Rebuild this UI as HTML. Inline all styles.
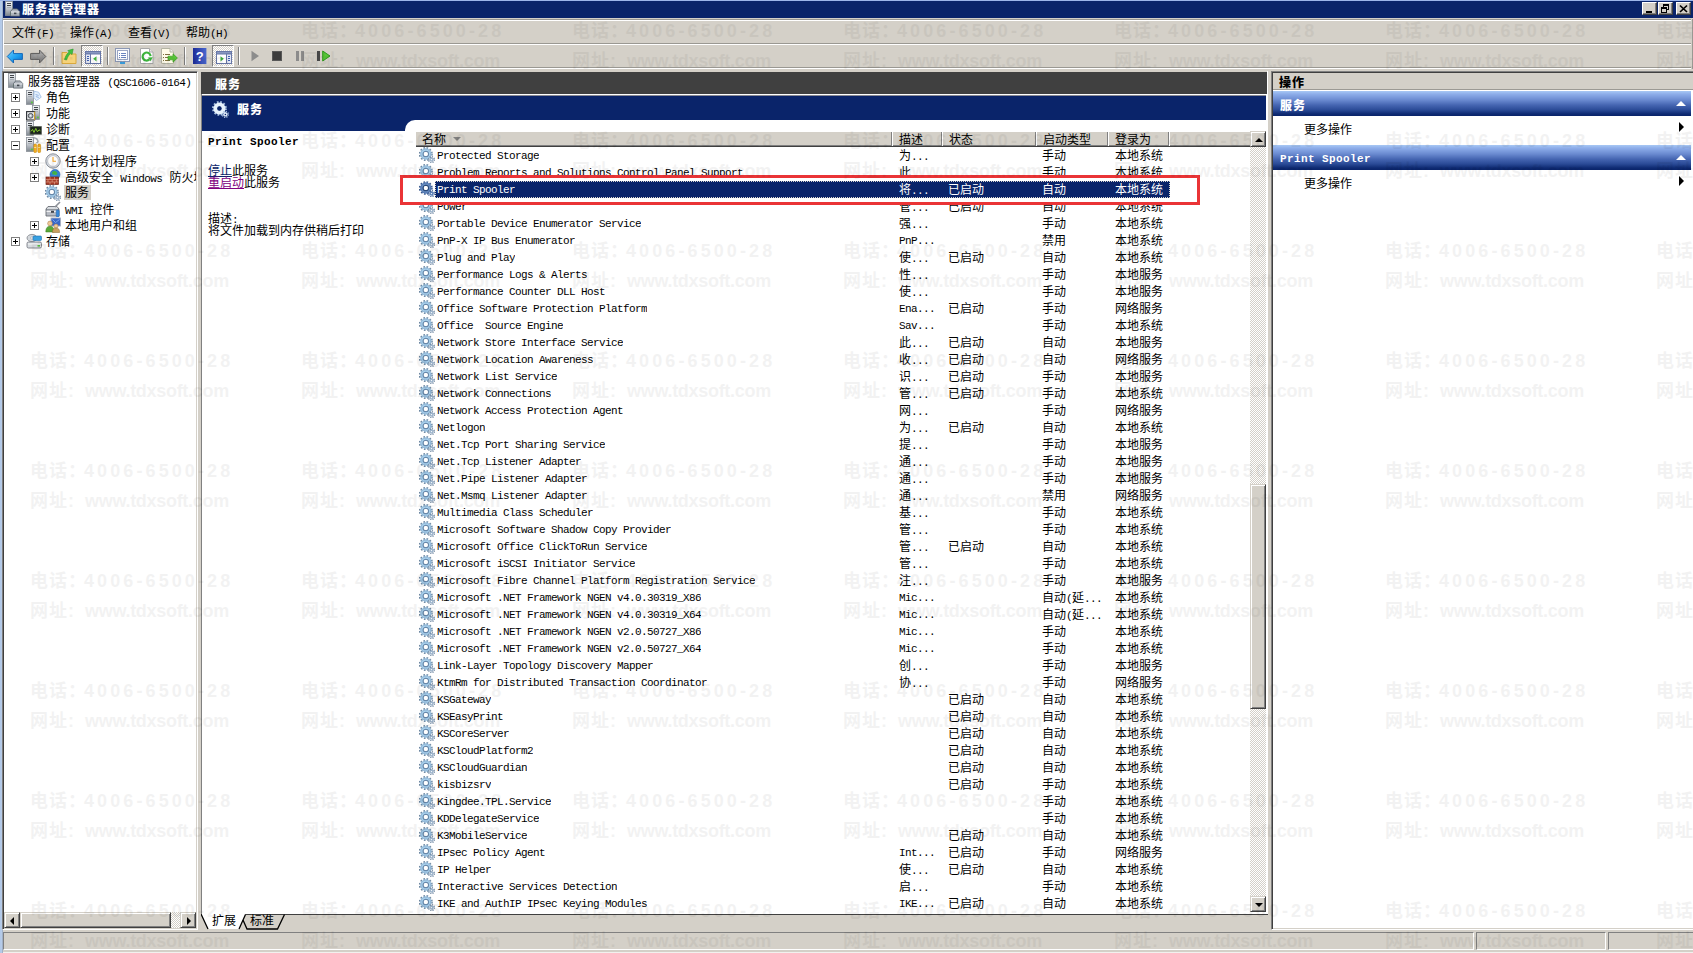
<!DOCTYPE html>
<html lang="zh-CN"><head><meta charset="utf-8"><title>服务器管理器</title>
<style>
*{box-sizing:border-box;margin:0;padding:0}
html,body{width:1693px;height:953px;overflow:hidden;background:#d4d0c8}
body{position:relative;font:12px/14px "Liberation Mono","Noto Sans CJK SC",monospace;color:#000}
.e{font-family:"Liberation Mono",monospace;font-size:11px;letter-spacing:-0.6px}
.abs{position:absolute}
.b{font-weight:bold}
#frameL{left:0;top:0;width:3px;height:953px;background:linear-gradient(90deg,#b0c8ea 0,#b8cce6 2px,#a0b0c8 2px,#a0b0c8 3px)}
#topline{left:0;top:0;width:1693px;height:1px;background:#9db6ea}
#title{left:3px;top:1px;width:1690px;height:17px;background:#0a246a;color:#fff;font-weight:bold}
#title .tx{position:absolute;left:19px;top:3px;font-size:12px;letter-spacing:1px;line-height:14px;font-weight:900}
.wb{position:absolute;top:1px;width:15px;height:13px;background:#d4d0c8;border:1px solid;border-color:#fff #404040 #404040 #fff;box-shadow:inset -1px -1px 0 #808080}
#menusep1{left:3px;top:19px;width:1688px;height:1px;background:#9a9892}
#menusep2{left:3px;top:20px;width:1688px;height:1px;background:#fff}
.mi{position:absolute;top:27px;height:14px;white-space:nowrap}
#tbsep1{left:3px;top:43px;width:1688px;height:1px;background:#9a9892}
#tbsep2{left:3px;top:44px;width:1688px;height:1px;background:#fff}
#tbsep3{left:3px;top:67px;width:1688px;height:1px;background:#9a9892}
#tbsep4{left:3px;top:68px;width:1688px;height:1px;background:#fff}
.ti{position:absolute;top:48px;width:16px;height:16px}
.tsep{position:absolute;top:47px;width:2px;height:18px;border-left:1px solid #808080;border-right:1px solid #fff}
.tpress{position:absolute;top:45px;width:22px;height:22px;border:1px solid;border-color:#808080 #fff #fff #808080;background:repeating-conic-gradient(#fff 0 25%,#d4d0c8 0 50%) 0 0/2px 2px}
/* tree */
#tree{left:2px;top:71px;width:196px;height:859px;background:#fff;border:1px solid;border-color:#808080 #fff #fff #808080;box-shadow:inset 1px 1px 0 #404040,inset -1px -1px 0 #d4d0c8}
.tr{position:absolute;height:16px;line-height:16px;white-space:nowrap;padding-top:2px}
.pm{position:absolute;width:9px;height:9px;border:1px solid #808080;background:#fff}
.pm:before{content:"";position:absolute;left:1px;top:3px;width:5px;height:1px;background:#000}
.pm.p:after{content:"";position:absolute;left:3px;top:1px;width:1px;height:5px;background:#000}
.ic{position:absolute;width:16px;height:16px}
/* hscroll */
#hs{left:4px;top:912px;width:192px;height:16px}
.sb{position:absolute;background:#d4d0c8;border:1px solid;border-color:#d4d0c8 #404040 #404040 #d4d0c8;box-shadow:inset 1px 1px 0 #fff,inset -1px -1px 0 #808080}
/* middle */
#midhdr{left:201px;top:72px;width:1066px;height:22px;background:#404040;color:#fff;font-weight:bold}
#mid{left:201px;top:94px;width:1067px;height:820px;background:#fff;border-left:1px solid #808080;}
#navy{left:202px;top:96px;width:1064px;height:35px;background:#0a246a}
#corner{left:405px;top:120px;width:861px;height:13px;background:#fff;border-top-left-radius:10px 10px}
#lh{left:416px;top:132px;width:834px;height:15px;background:#d4d0c8;border-bottom:1px solid #404040;box-shadow:inset 0 -1px 0 #808080}
.hc{position:absolute;top:0;height:14px;border-right:1px solid #808080;box-shadow:1px 0 0 #fff;padding-left:6px;padding-top:2px;line-height:14px;white-space:nowrap}
.r{position:absolute;left:416px;width:834px;height:17px;line-height:17px;white-space:pre}
.r .g{position:absolute;left:3px;top:0;width:16px;height:16px}
.c{position:absolute;top:0;height:17px;overflow:hidden;padding-top:2px}
.c.n,.c.la{padding-top:1px}
.n{left:21px}.d{left:483px}.s{left:532px}.t{left:626px}.l{left:699px}
.sel{z-index:6}
.sel .c{color:#fff}
.selbg{position:absolute;left:19px;top:0;width:735px;height:17px;background:#0a246a;outline:1px dotted #d9d5cd;outline-offset:-1px}
.wm{position:absolute;font:18px/20px "Liberation Sans","Noto Sans CJK SC",sans-serif;color:#000;opacity:.046;font-weight:bold;white-space:nowrap;letter-spacing:1px;pointer-events:none;z-index:50}
/* right */
#right{left:1271px;top:71px;width:422px;height:859px;background:#fff;border:1px solid;border-color:#808080 #fff #fff #808080;border-right:0;box-shadow:inset 1px 1px 0 #404040,inset 0 -1px 0 #d4d0c8}
.ah{position:absolute;left:1273px;width:418px;height:25px;background:linear-gradient(#a8c8f4 0,#8eaeea 3px,#6a8ad0 9px,#4666b2 14px,#2a4a96 19px,#0e2a72 23px,#0a246a 25px);color:#fff;font-weight:bold;line-height:14px;padding:9px 0 0 7px}
.tri-up{position:absolute;right:5px;top:10px;width:0;height:0;border:5px solid transparent;border-top:0;border-bottom:5px solid #fff}
.tri-r{position:absolute;width:0;height:0;border:5px solid transparent;border-right:0;border-left:5px solid #000}

.eb{font-weight:bold;letter-spacing:.4px}
.bc{letter-spacing:1px;font-weight:900}
.dither{background:repeating-conic-gradient(#fff 0 25%,#d4d0c8 0 50%) 0 0/2px 2px}
.tri-l{position:absolute;width:0;height:0;border:4px solid transparent;border-left:0;border-right:4px solid #000}
.tri-u{position:absolute;width:0;height:0;border:4px solid transparent;border-top:0;border-bottom:4px solid #000}
.tri-d{position:absolute;width:0;height:0;border:4px solid transparent;border-bottom:0;border-top:4px solid #000}
.hc{top:132px}
.wd{letter-spacing:3.1px;margin-left:-3px}
.ww{margin-left:10px;letter-spacing:-.3px}
#navy:before{content:"";position:absolute;left:0;top:-1px;width:100%;height:1px;background:#8a8a92}
.tri-r4{position:absolute;width:0;height:0;border:4px solid transparent;border-right:0;border-left:4px solid #000}
</style></head><body>
<svg width="0" height="0" style="position:absolute">
<defs>
<g id="gear">
<circle cx="6.8" cy="7" r="5.9" fill="none" stroke="#6e88a2" stroke-width="2.2" stroke-dasharray="1.6 1.49"/>
<circle cx="6.8" cy="7" r="4.2" fill="none" stroke="#aad4f0" stroke-width="3"/>
<circle cx="6.8" cy="7" r="4.9" fill="none" stroke="#8eb0d0" stroke-width=".9"/>
<circle cx="6.8" cy="7" r="2.7" fill="none" stroke="#6888aa" stroke-width="1.3"/>
<circle cx="6.8" cy="7" r="2" fill="#fff"/>
<circle cx="12.5" cy="12.6" r="2.8" fill="none" stroke="#6c849e" stroke-width="1.4" stroke-dasharray="1.1 1.1"/>
<circle cx="12.5" cy="12.6" r="2.1" fill="#9cb4cc"/>
<circle cx="12.5" cy="12.6" r=".7" fill="#fff"/>
</g>
<g id="gearsel">
<circle cx="6.8" cy="7" r="5.9" fill="none" stroke="#34548a" stroke-width="2" stroke-dasharray="1.6 1.49"/>
<circle cx="6.8" cy="7" r="4.2" fill="none" stroke="#6a90c4" stroke-width="3"/>
<circle cx="6.8" cy="7" r="4.9" fill="none" stroke="#4c70aa" stroke-width=".8"/>
<circle cx="6.8" cy="7" r="2.7" fill="none" stroke="#284878" stroke-width="1.3"/>
<circle cx="6.8" cy="7" r="2" fill="#fff"/>
<circle cx="12.5" cy="12.6" r="2.8" fill="none" stroke="#3a5a90" stroke-width="1.4" stroke-dasharray="1.1 1.1"/>
<circle cx="12.5" cy="12.6" r="2.1" fill="#5c80b8"/>
<circle cx="12.5" cy="12.6" r=".7" fill="#fff"/>
</g>
<linearGradient id="tg" x1="0" y1="0" x2="0" y2="1"><stop offset="0" stop-color="#f6f8fa"/><stop offset=".4" stop-color="#d0d4da"/><stop offset="1" stop-color="#7e868e"/></linearGradient>
<g id="tower"><rect x=".4" y=".4" width="7" height="14" fill="url(#tg)" stroke="#8a9098" stroke-width=".8"/><path d="M2 2.5h4M2 4.5h4" stroke="#30343a" stroke-width=".9"/><path d="M2 6.6h4" stroke="#9aa0a8" stroke-width=".8"/><rect x="5" y="11.6" width="1.8" height="1.6" fill="#58c83c"/></g>
<g id="srvico">
<use href="#tower" x="0" y="0"/>
<path d="M5.5 10.5 l2.2 -2.6 h4.6 l2.4 2.6 v4.6 h-9.2z" fill="#aeb4bc" stroke="#5c646c" stroke-width=".8"/>
<path d="M6 11h8.4" stroke="#f0f2f4" stroke-width=".9"/>
<rect x="9" y="11.6" width="2.4" height="1.6" fill="#40464e"/>
</g>
<g id="rolesico">
<use href="#tower" x="0" y="1"/>
<path d="M8 2.2 l4.6 1 l2.6 5 l-4.8 3.4 l-2.6 -3.2z" fill="#e4f0fc" stroke="#9cbce4" stroke-width=".8"/>
<path d="M9.6 5.6 l3 .8M9.8 7.6 l3 .8" stroke="#78a0d8" stroke-width=".8"/>
</g>
<g id="featico">
<use href="#tower" x="6" y="0"/>
<rect x=".6" y="6.6" width="8" height="8.4" fill="#e8eaec" stroke="#2c3036" stroke-width="1.1"/>
<circle cx="4.6" cy="10.8" r="2.4" fill="#b8bec6" stroke="#30343a" stroke-width=".8"/>
<circle cx="4.6" cy="10.8" r=".8" fill="#fff"/>
<path d="M8.6 6.6v8.4" stroke="#f0b828" stroke-width=".9"/>
</g>
<g id="diagico">
<use href="#tower" x="0" y="0"/>
<rect x="4" y="5.6" width="11.4" height="7.6" fill="#1c241c" stroke="#586058" stroke-width=".8"/>
<path d="M5 10.4 l1.6 -2 l1.4 3 l1.8 -4 l1.6 3.4 l1.6 -2 l1.4 1" fill="none" stroke="#8cd830" stroke-width=".9"/>
</g>
<g id="confico">
<use href="#tower" x="0" y="0"/>
<path d="M8 .8 c2 .2 3.6 1.6 4 4 l-1.6 1.4" fill="none" stroke="#a8aeb6" stroke-width="1.6"/>
<rect x="7.8" y="7" width="2.8" height="8.6" rx="1.2" fill="#f4b020" stroke="#b87808" stroke-width=".5"/>
<rect x="11.8" y="7" width="2.8" height="8.6" rx="1.2" fill="#f4b020" stroke="#b87808" stroke-width=".5"/>
<path d="M8.2 10.5h2M12.2 10.5h2" stroke="#fff0a0" stroke-width=".8"/>
</g>
<g id="clockico">
<circle cx="8" cy="8" r="7.2" fill="#d8dce4" stroke="#8c9098" stroke-width="1"/>
<circle cx="8" cy="8" r="5.4" fill="#fcfcfc" stroke="#b0b4bc" stroke-width=".7"/>
<path d="M8 4 v4.2 h3" fill="none" stroke="#f0a020" stroke-width="1.1"/>
</g>
<g id="fwico">
<circle cx="10" cy="5.5" r="5" fill="#3888d8" stroke="#2060b0" stroke-width=".6"/>
<path d="M7 3.5 c2 -2.5 4 -1.5 5 0 c1 1.5 -.5 3 -2 2.5 c-1.5 -.5 -2.5 .5 -3 -2.5z" fill="#48b848"/>
<rect x="1" y="8" width="12.5" height="7.5" fill="#a83c28" stroke="#6c2014" stroke-width=".7"/>
<path d="M1 10.5h12.5M1 13h12.5M5 8v2.5M9.5 8v2.5M3 10.5v2.5M7.2 10.5v2.5M11.4 10.5v2.5M5 13v2.5M9.5 13v2.5" stroke="#e0a890" stroke-width=".6"/>
</g>
<g id="wmiico">
<path d="M1 8 h13 v7 h-13z" fill="#b8bcc4" stroke="#5c6068" stroke-width=".8"/>
<path d="M1 8 l2 -2.5 h9 l2 2.5" fill="#d8dce0" stroke="#5c6068" stroke-width=".8"/>
<path d="M1.5 10.5h12" stroke="#fff" stroke-width=".8"/>
<rect x="6" y="9.8" width="3" height="2" fill="#40444c"/>
<path d="M10 6 L15 1" stroke="#8c9098" stroke-width="1.6"/>
<rect x="11.2" y="9" width="3" height="7" rx="1" fill="#3888d8" stroke="#2060a8" stroke-width=".5"/>
</g>
<g id="usersico">
<rect x="6" y="1" width="9.5" height="8" fill="#3868c8" stroke="#a8b0c0" stroke-width=".9"/>
<path d="M7.5 2.5 l3 3 l4 -3" fill="none" stroke="#88b0f0" stroke-width=".8"/>
<circle cx="5" cy="6.5" r="2.4" fill="#f0c898" stroke="#a87848" stroke-width=".5"/>
<path d="M.8 15 c0 -4.5 2 -5.8 4.2 -5.8 s4.2 1.3 4.2 5.8z" fill="#58a838" stroke="#38781c" stroke-width=".5"/>
<circle cx="11" cy="9" r="2.1" fill="#f0c898" stroke="#a87848" stroke-width=".5"/>
<path d="M7.4 15.5 c0 -3.6 1.6 -4.6 3.6 -4.6 s3.6 1 3.6 4.6z" fill="#c8a060" stroke="#886428" stroke-width=".5"/>
</g>
<g id="storico">
<ellipse cx="6" cy="5" rx="5" ry="3.6" fill="#d4d8dc" stroke="#7c8088" stroke-width=".8"/>
<ellipse cx="6" cy="5" rx="1.6" ry="1.1" fill="#fff" stroke="#8c9098" stroke-width=".5"/>
<rect x="7" y="3" width="8.5" height="4.5" rx="1" fill="#38a0e0" stroke="#2070b0" stroke-width=".6"/>
<rect x="1" y="9" width="14.5" height="6" rx="1.5" fill="#d8dce0" stroke="#6c7078" stroke-width=".8"/>
<path d="M2 11 h12.5" stroke="#fff" stroke-width=".8"/>
<rect x="11.5" y="12" width="2.5" height="1.6" fill="#58c040"/>
</g>
<g id="gearnavy">
<circle cx="7" cy="7" r="6" fill="none" stroke="#a8c0e0" stroke-width="2" stroke-dasharray="1.6 1.54"/>
<circle cx="7" cy="7" r="3.9" fill="none" stroke="#e6f2fc" stroke-width="3.6"/>
<circle cx="7" cy="7" r="1.8" fill="#0a246a"/>
<circle cx="12.6" cy="12.6" r="2.8" fill="none" stroke="#a8c0e0" stroke-width="1.4" stroke-dasharray="1.1 1.1"/>
<circle cx="12.6" cy="12.6" r="2.1" fill="#dce8f8"/>
<circle cx="12.6" cy="12.6" r=".7" fill="#0a246a"/>
</g>
</defs></svg>

<div id="frameL" class="abs"></div>
<div class="abs" style="left:3px;top:952px;width:1690px;height:1px;background:#f2f1ee"></div>
<div id="topline" class="abs"></div>
<div id="title" class="abs"><span class="tx">服务器管理器</span>
<svg class="abs" style="left:2px;top:0" width="16" height="16" viewBox="0 0 16 16"><use href="#srvico"/></svg>
<div class="wb" style="left:1639px"><i style="position:absolute;left:3px;top:8px;width:6px;height:2px;background:#000"></i></div>
<div class="wb" style="left:1655px"><i style="position:absolute;left:4px;top:1px;width:6px;height:6px;border:1px solid #000;border-top-width:2px"></i><i style="position:absolute;left:2px;top:4px;width:6px;height:6px;border:1px solid #000;border-top-width:2px;background:#d4d0c8"></i></div>
<div class="wb" style="left:1673px"><svg style="position:absolute;left:2px;top:1px" width="9" height="9" viewBox="0 0 9 9"><path d="M1 1.5 L8 8 M8 1.5 L1 8" stroke="#000" stroke-width="1.7"/></svg></div>
</div>
<div id="menusep1" class="abs"></div><div id="menusep2" class="abs"></div>
<div class="mi" style="left:12px">文件<span class="e">(F)</span></div>
<div class="mi" style="left:70px">操作<span class="e">(A)</span></div>
<div class="mi" style="left:128px">查看<span class="e">(V)</span></div>
<div class="mi" style="left:186px">帮助<span class="e">(H)</span></div>
<div id="tbsep1" class="abs"></div><div id="tbsep2" class="abs"></div>
<div id="tbsep3" class="abs"></div><div id="tbsep4" class="abs"></div>

<!-- toolbar -->
<div class="abs" style="left:3px;top:20px;width:1px;height:48px;background:#fff"></div>
<div class="abs" style="left:1692px;top:19px;width:1px;height:50px;background:#9a9892"></div>
<svg class="abs" style="left:6px;top:48px" width="18" height="16" viewBox="0 0 18 16"><defs><linearGradient id="gb" x1="0" y1="0" x2="1" y2="1"><stop offset="0" stop-color="#6fd0ff"/><stop offset=".55" stop-color="#1ea0f0"/><stop offset="1" stop-color="#0866c8"/></linearGradient></defs><path d="M1.2 8.5 L7.5 2 L7.5 5.6 L16.4 5.6 L16.4 11.4 L7.5 11.4 L7.5 15 Z" fill="url(#gb)" stroke="#1668b8" stroke-width="1"/></svg>
<svg class="abs" style="left:29px;top:48px" width="18" height="16" viewBox="0 0 18 16"><defs><linearGradient id="gg" x1="0" y1="0" x2="0" y2="1"><stop offset="0" stop-color="#b4b4b4"/><stop offset="1" stop-color="#7c7c7c"/></linearGradient></defs><path d="M16.8 8.5 L10.5 2 L10.5 5.6 L1.6 5.6 L1.6 11.4 L10.5 11.4 L10.5 15 Z" fill="url(#gg)" stroke="#606060" stroke-width="1"/></svg>
<div class="tsep" style="left:53px"></div>
<svg class="abs" style="left:61px;top:48px" width="17" height="16" viewBox="0 0 17 16"><path d="M1 4.5 h5 l1.5 1.5 h7.5 v9.5 h-14z" fill="#f6d27a" stroke="#d9a83c"/><path d="M3.5 11.5 C4.5 8 6 5.5 8.2 4 L6.8 2.6 L12.2 1 L11 6.6 L9.6 5.3 C8 6.8 6.6 9 5.6 12Z" fill="#3fc03f" stroke="#2a9a2a" stroke-width=".6"/></svg>
<div class="tpress" style="left:81px"></div>
<svg class="abs" style="left:85px;top:51px" width="16" height="13" viewBox="0 0 16 13"><rect x=".5" y=".5" width="15" height="12" fill="#fff" stroke="#6878a8"/><rect x=".5" y=".5" width="15" height="2.5" fill="#8898c0" stroke="#6878a8"/><rect x=".5" y="3" width="5" height="9.5" fill="#e4e8f4" stroke="#6878a8"/><path d="M2 5.5h2M2 7.5h2M2 9.5h2" stroke="#4060b0"/><path d="M11.5 5.2 v5.2 l-3.4 -2.6z" fill="#40b040"/></svg>
<div class="tsep" style="left:107px"></div>
<svg class="abs" style="left:115px;top:48px" width="15" height="16" viewBox="0 0 15 16"><rect x=".5" y=".5" width="14" height="13" fill="#f4f6fa" stroke="#8c98b4"/><rect x="2.5" y="2.5" width="10" height="9" fill="#fff" stroke="#9aa6c4"/><path d="M4 5.5h1M6 5.5h5M4 7.5h1M6 7.5h5M4 9.5h1M6 9.5h5" stroke="#6a84c0"/><rect x="5" y="14" width="5" height="2" fill="#3aa0e0"/></svg>
<svg class="abs" style="left:140px;top:48px" width="14" height="16" viewBox="0 0 14 16"><path d="M.5 .5 h9 l3.5 3.5 v11.5 h-12.5z" fill="#fff" stroke="#a8a8a8"/><path d="M9.5 .5 v3.5 h3.5" fill="#e8e8e8" stroke="#a8a8a8"/><path d="M10.6 8.2 A4 4 0 1 0 9.4 11.4" fill="none" stroke="#3cb43c" stroke-width="2.2"/><path d="M12.8 9.2 L8 9.6 L10.6 13.2z" fill="#3cb43c"/></svg>
<svg class="abs" style="left:161px;top:48px" width="17" height="16" viewBox="0 0 17 16"><path d="M.5 .5 h8.5 l3.5 3.5 v11.5 h-12z" fill="#fffbe8" stroke="#b4b4a4"/><path d="M9 .5 v3.5 h3.5" fill="#eee" stroke="#b4b4a4"/><path d="M2 6.5h1M4 6.5h5M2 9.5h1M4 9.5h4M2 12.5h1M4 12.5h5" stroke="#807040"/><path d="M7 8.2 h5 v-2.4 l4.4 4.2 l-4.4 4.2 v-2.4 h-5z" fill="#58c838" stroke="#3a9a24" stroke-width=".7"/></svg>
<div class="tsep" style="left:184px"></div>
<svg class="abs" style="left:193px;top:48px" width="14" height="16" viewBox="0 0 14 16"><defs><linearGradient id="gh" x1="0" y1="0" x2="1" y2="0"><stop offset="0" stop-color="#1c2c98"/><stop offset="1" stop-color="#4a68d0"/></linearGradient></defs><rect width="13.4" height="16" fill="url(#gh)"/><text x="6.7" y="13" font-family="Liberation Sans,sans-serif" font-weight="bold" font-size="13" fill="#fff" text-anchor="middle">?</text></svg>
<div class="tpress" style="left:212px"></div>
<svg class="abs" style="left:216px;top:51px" width="16" height="13" viewBox="0 0 16 13"><rect x=".5" y=".5" width="15" height="12" fill="#fff" stroke="#6878a8"/><rect x=".5" y=".5" width="15" height="2.5" fill="#8898c0" stroke="#6878a8"/><rect x="10.5" y="3" width="5" height="9.5" fill="#e4e8f4" stroke="#6878a8"/><path d="M12 5.5h2M12 7.5h2M12 9.5h2" stroke="#4060b0"/><path d="M4.5 5.2 v5.2 l3.4 -2.6z" fill="#40b040"/></svg>
<div class="tsep" style="left:238px"></div>
<svg class="abs" style="left:251px;top:50px" width="9" height="12" viewBox="0 0 9 12"><path d="M.5 .8 L8 6 L.5 11.2z" fill="#8c8c8c"/></svg>
<div class="abs" style="left:272px;top:51px;width:10px;height:10px;background:#3c3c3c;border:1px solid #585858"></div>
<div class="abs" style="left:296px;top:51px;width:3px;height:10px;background:#8c8c8c"></div>
<div class="abs" style="left:301px;top:51px;width:3px;height:10px;background:#8c8c8c"></div>
<div class="abs" style="left:317px;top:51px;width:3px;height:10px;background:#484848"></div>
<svg class="abs" style="left:322px;top:50px" width="9" height="12" viewBox="0 0 9 12"><path d="M.7 1 L8 6 L.7 11z" fill="#58c838" stroke="#2e9a1e" stroke-width="1"/></svg>

<div id="tree" class="abs"></div>
<div id="hs" class="abs dither"></div>
<!-- tree items -->
<svg class="ic" style="left:8px;top:73px" viewBox="0 0 16 16"><use href="#srvico"/></svg>
<div class="tr" style="left:28px;top:73px">服务器管理器 <span class="e">(QSC1606-0164)</span></div>
<div class="pm p" style="left:11px;top:93px"></div>
<svg class="ic" style="left:26px;top:89px" viewBox="0 0 16 16"><use href="#rolesico"/></svg>
<div class="tr" style="left:46px;top:89px">角色</div>
<div class="pm p" style="left:11px;top:109px"></div>
<svg class="ic" style="left:26px;top:105px" viewBox="0 0 16 16"><use href="#featico"/></svg>
<div class="tr" style="left:46px;top:105px">功能</div>
<div class="pm p" style="left:11px;top:125px"></div>
<svg class="ic" style="left:26px;top:121px" viewBox="0 0 16 16"><use href="#diagico"/></svg>
<div class="tr" style="left:46px;top:121px">诊断</div>
<div class="pm" style="left:11px;top:141px"></div>
<svg class="ic" style="left:26px;top:137px" viewBox="0 0 16 16"><use href="#confico"/></svg>
<div class="tr" style="left:46px;top:137px">配置</div>
<div class="pm p" style="left:30px;top:157px"></div>
<svg class="ic" style="left:45px;top:153px" viewBox="0 0 16 16"><use href="#clockico"/></svg>
<div class="tr" style="left:65px;top:153px">任务计划程序</div>
<div class="pm p" style="left:30px;top:173px"></div>
<svg class="ic" style="left:45px;top:169px" viewBox="0 0 16 16"><use href="#fwico"/></svg>
<div class="tr" style="left:65px;top:169px;width:131px;overflow:hidden">高级安全 <span class="e">Windows</span> 防火墙</div>
<svg class="ic" style="left:45px;top:185px" viewBox="0 0 16 16"><use href="#gear"/></svg>
<div class="tr" style="left:64px;top:185px;background:#d4d0c8;padding:2px 2px 0 1px;height:15px;line-height:14px">服务</div>
<svg class="ic" style="left:45px;top:201px" viewBox="0 0 16 16"><use href="#wmiico"/></svg>
<div class="tr" style="left:65px;top:201px"><span class="e">WMI</span> 控件</div>
<div class="pm p" style="left:30px;top:221px"></div>
<svg class="ic" style="left:45px;top:217px" viewBox="0 0 16 16"><use href="#usersico"/></svg>
<div class="tr" style="left:65px;top:217px">本地用户和组</div>
<div class="pm p" style="left:11px;top:237px"></div>
<svg class="ic" style="left:26px;top:233px" viewBox="0 0 16 16"><use href="#storico"/></svg>
<div class="tr" style="left:46px;top:233px">存储</div>
<!-- hscroll -->
<div class="sb" style="left:4px;top:912px;width:16px;height:16px"><i class="tri-l" style="left:5px;top:4px"></i></div>
<div class="sb" style="left:20px;top:912px;width:151px;height:16px"></div>
<div class="sb" style="left:180px;top:912px;width:16px;height:16px"><i class="tri-r4" style="left:6px;top:4px"></i></div>


<div id="midhdr" class="abs"><span class="bc" style="position:absolute;left:14px;top:7px">服务</span></div>
<div id="mid" class="abs"></div>
<div class="abs" style="left:1267px;top:71px;width:1px;height:24px;background:#fff"></div>
<div id="navy" class="abs"><span class="b bc" style="position:absolute;left:35px;top:8px;color:#fff">服务</span></div>
<div id="corner" class="abs"></div>
<div id="lh" class="abs"></div>
<div class="r" style="top:147px"><svg class="g" viewBox="0 0 16 16"><use href="#gear"/></svg><span class="c n"><span class="e">Protected Storage</span></span><span class="c d">为<span class="e">...</span></span><span class="c s"></span><span class="c t">手动</span><span class="c l">本地系统</span></div>
<div class="r cutb" style="top:164px"><svg class="g" viewBox="0 0 16 16"><use href="#gear"/></svg><span class="c n"><span class="e">Problem Reports and Solutions Control Panel Support</span></span><span class="c d">此<span class="e">...</span></span><span class="c s"></span><span class="c t">手动</span><span class="c l">本地系统</span></div>
<div class="r sel" style="top:181px"><i class="selbg"></i><svg class="g" viewBox="0 0 16 16"><use href="#gearsel"/></svg><span class="c n"><span class="e">Print Spooler</span></span><span class="c d">将<span class="e">...</span></span><span class="c s">已启动</span><span class="c t">自动</span><span class="c l">本地系统</span></div>
<div class="r cutt" style="top:198px"><svg class="g" viewBox="0 0 16 16"><use href="#gear"/></svg><span class="c n"><span class="e">Power</span></span><span class="c d">管<span class="e">...</span></span><span class="c s">已启动</span><span class="c t">自动</span><span class="c l">本地系统</span></div>
<div class="r" style="top:215px"><svg class="g" viewBox="0 0 16 16"><use href="#gear"/></svg><span class="c n"><span class="e">Portable Device Enumerator Service</span></span><span class="c d">强<span class="e">...</span></span><span class="c s"></span><span class="c t">手动</span><span class="c l">本地系统</span></div>
<div class="r" style="top:232px"><svg class="g" viewBox="0 0 16 16"><use href="#gear"/></svg><span class="c n"><span class="e">PnP-X IP Bus Enumerator</span></span><span class="c d la"><span class="e">PnP...</span></span><span class="c s"></span><span class="c t">禁用</span><span class="c l">本地系统</span></div>
<div class="r" style="top:249px"><svg class="g" viewBox="0 0 16 16"><use href="#gear"/></svg><span class="c n"><span class="e">Plug and Play</span></span><span class="c d">使<span class="e">...</span></span><span class="c s">已启动</span><span class="c t">自动</span><span class="c l">本地系统</span></div>
<div class="r" style="top:266px"><svg class="g" viewBox="0 0 16 16"><use href="#gear"/></svg><span class="c n"><span class="e">Performance Logs &amp; Alerts</span></span><span class="c d">性<span class="e">...</span></span><span class="c s"></span><span class="c t">手动</span><span class="c l">本地服务</span></div>
<div class="r" style="top:283px"><svg class="g" viewBox="0 0 16 16"><use href="#gear"/></svg><span class="c n"><span class="e">Performance Counter DLL Host</span></span><span class="c d">使<span class="e">...</span></span><span class="c s"></span><span class="c t">手动</span><span class="c l">本地服务</span></div>
<div class="r" style="top:300px"><svg class="g" viewBox="0 0 16 16"><use href="#gear"/></svg><span class="c n"><span class="e">Office Software Protection Platform</span></span><span class="c d la"><span class="e">Ena...</span></span><span class="c s">已启动</span><span class="c t">手动</span><span class="c l">网络服务</span></div>
<div class="r" style="top:317px"><svg class="g" viewBox="0 0 16 16"><use href="#gear"/></svg><span class="c n"><span class="e">Office  Source Engine</span></span><span class="c d la"><span class="e">Sav...</span></span><span class="c s"></span><span class="c t">手动</span><span class="c l">本地系统</span></div>
<div class="r" style="top:334px"><svg class="g" viewBox="0 0 16 16"><use href="#gear"/></svg><span class="c n"><span class="e">Network Store Interface Service</span></span><span class="c d">此<span class="e">...</span></span><span class="c s">已启动</span><span class="c t">自动</span><span class="c l">本地服务</span></div>
<div class="r" style="top:351px"><svg class="g" viewBox="0 0 16 16"><use href="#gear"/></svg><span class="c n"><span class="e">Network Location Awareness</span></span><span class="c d">收<span class="e">...</span></span><span class="c s">已启动</span><span class="c t">自动</span><span class="c l">网络服务</span></div>
<div class="r" style="top:368px"><svg class="g" viewBox="0 0 16 16"><use href="#gear"/></svg><span class="c n"><span class="e">Network List Service</span></span><span class="c d">识<span class="e">...</span></span><span class="c s">已启动</span><span class="c t">手动</span><span class="c l">本地服务</span></div>
<div class="r" style="top:385px"><svg class="g" viewBox="0 0 16 16"><use href="#gear"/></svg><span class="c n"><span class="e">Network Connections</span></span><span class="c d">管<span class="e">...</span></span><span class="c s">已启动</span><span class="c t">手动</span><span class="c l">本地系统</span></div>
<div class="r" style="top:402px"><svg class="g" viewBox="0 0 16 16"><use href="#gear"/></svg><span class="c n"><span class="e">Network Access Protection Agent</span></span><span class="c d">网<span class="e">...</span></span><span class="c s"></span><span class="c t">手动</span><span class="c l">网络服务</span></div>
<div class="r" style="top:419px"><svg class="g" viewBox="0 0 16 16"><use href="#gear"/></svg><span class="c n"><span class="e">Netlogon</span></span><span class="c d">为<span class="e">...</span></span><span class="c s">已启动</span><span class="c t">自动</span><span class="c l">本地系统</span></div>
<div class="r" style="top:436px"><svg class="g" viewBox="0 0 16 16"><use href="#gear"/></svg><span class="c n"><span class="e">Net.Tcp Port Sharing Service</span></span><span class="c d">提<span class="e">...</span></span><span class="c s"></span><span class="c t">手动</span><span class="c l">本地服务</span></div>
<div class="r" style="top:453px"><svg class="g" viewBox="0 0 16 16"><use href="#gear"/></svg><span class="c n"><span class="e">Net.Tcp Listener Adapter</span></span><span class="c d">通<span class="e">...</span></span><span class="c s"></span><span class="c t">手动</span><span class="c l">本地服务</span></div>
<div class="r" style="top:470px"><svg class="g" viewBox="0 0 16 16"><use href="#gear"/></svg><span class="c n"><span class="e">Net.Pipe Listener Adapter</span></span><span class="c d">通<span class="e">...</span></span><span class="c s"></span><span class="c t">手动</span><span class="c l">本地服务</span></div>
<div class="r" style="top:487px"><svg class="g" viewBox="0 0 16 16"><use href="#gear"/></svg><span class="c n"><span class="e">Net.Msmq Listener Adapter</span></span><span class="c d">通<span class="e">...</span></span><span class="c s"></span><span class="c t">禁用</span><span class="c l">网络服务</span></div>
<div class="r" style="top:504px"><svg class="g" viewBox="0 0 16 16"><use href="#gear"/></svg><span class="c n"><span class="e">Multimedia Class Scheduler</span></span><span class="c d">基<span class="e">...</span></span><span class="c s"></span><span class="c t">手动</span><span class="c l">本地系统</span></div>
<div class="r" style="top:521px"><svg class="g" viewBox="0 0 16 16"><use href="#gear"/></svg><span class="c n"><span class="e">Microsoft Software Shadow Copy Provider</span></span><span class="c d">管<span class="e">...</span></span><span class="c s"></span><span class="c t">手动</span><span class="c l">本地系统</span></div>
<div class="r" style="top:538px"><svg class="g" viewBox="0 0 16 16"><use href="#gear"/></svg><span class="c n"><span class="e">Microsoft Office ClickToRun Service</span></span><span class="c d">管<span class="e">...</span></span><span class="c s">已启动</span><span class="c t">自动</span><span class="c l">本地系统</span></div>
<div class="r" style="top:555px"><svg class="g" viewBox="0 0 16 16"><use href="#gear"/></svg><span class="c n"><span class="e">Microsoft iSCSI Initiator Service</span></span><span class="c d">管<span class="e">...</span></span><span class="c s"></span><span class="c t">手动</span><span class="c l">本地系统</span></div>
<div class="r" style="top:572px"><svg class="g" viewBox="0 0 16 16"><use href="#gear"/></svg><span class="c n"><span class="e">Microsoft Fibre Channel Platform Registration Service</span></span><span class="c d">注<span class="e">...</span></span><span class="c s"></span><span class="c t">手动</span><span class="c l">本地服务</span></div>
<div class="r" style="top:589px"><svg class="g" viewBox="0 0 16 16"><use href="#gear"/></svg><span class="c n"><span class="e">Microsoft .NET Framework NGEN v4.0.30319_X86</span></span><span class="c d la"><span class="e">Mic...</span></span><span class="c s"></span><span class="c t">自动<span class="e">(</span>延<span class="e">...</span></span><span class="c l">本地系统</span></div>
<div class="r" style="top:606px"><svg class="g" viewBox="0 0 16 16"><use href="#gear"/></svg><span class="c n"><span class="e">Microsoft .NET Framework NGEN v4.0.30319_X64</span></span><span class="c d la"><span class="e">Mic...</span></span><span class="c s"></span><span class="c t">自动<span class="e">(</span>延<span class="e">...</span></span><span class="c l">本地系统</span></div>
<div class="r" style="top:623px"><svg class="g" viewBox="0 0 16 16"><use href="#gear"/></svg><span class="c n"><span class="e">Microsoft .NET Framework NGEN v2.0.50727_X86</span></span><span class="c d la"><span class="e">Mic...</span></span><span class="c s"></span><span class="c t">手动</span><span class="c l">本地系统</span></div>
<div class="r" style="top:640px"><svg class="g" viewBox="0 0 16 16"><use href="#gear"/></svg><span class="c n"><span class="e">Microsoft .NET Framework NGEN v2.0.50727_X64</span></span><span class="c d la"><span class="e">Mic...</span></span><span class="c s"></span><span class="c t">手动</span><span class="c l">本地系统</span></div>
<div class="r" style="top:657px"><svg class="g" viewBox="0 0 16 16"><use href="#gear"/></svg><span class="c n"><span class="e">Link-Layer Topology Discovery Mapper</span></span><span class="c d">创<span class="e">...</span></span><span class="c s"></span><span class="c t">手动</span><span class="c l">本地服务</span></div>
<div class="r" style="top:674px"><svg class="g" viewBox="0 0 16 16"><use href="#gear"/></svg><span class="c n"><span class="e">KtmRm for Distributed Transaction Coordinator</span></span><span class="c d">协<span class="e">...</span></span><span class="c s"></span><span class="c t">手动</span><span class="c l">网络服务</span></div>
<div class="r" style="top:691px"><svg class="g" viewBox="0 0 16 16"><use href="#gear"/></svg><span class="c n"><span class="e">KSGateway</span></span><span class="c d"></span><span class="c s">已启动</span><span class="c t">自动</span><span class="c l">本地系统</span></div>
<div class="r" style="top:708px"><svg class="g" viewBox="0 0 16 16"><use href="#gear"/></svg><span class="c n"><span class="e">KSEasyPrint</span></span><span class="c d"></span><span class="c s">已启动</span><span class="c t">自动</span><span class="c l">本地系统</span></div>
<div class="r" style="top:725px"><svg class="g" viewBox="0 0 16 16"><use href="#gear"/></svg><span class="c n"><span class="e">KSCoreServer</span></span><span class="c d"></span><span class="c s">已启动</span><span class="c t">自动</span><span class="c l">本地系统</span></div>
<div class="r" style="top:742px"><svg class="g" viewBox="0 0 16 16"><use href="#gear"/></svg><span class="c n"><span class="e">KSCloudPlatform2</span></span><span class="c d"></span><span class="c s">已启动</span><span class="c t">自动</span><span class="c l">本地系统</span></div>
<div class="r" style="top:759px"><svg class="g" viewBox="0 0 16 16"><use href="#gear"/></svg><span class="c n"><span class="e">KSCloudGuardian</span></span><span class="c d"></span><span class="c s">已启动</span><span class="c t">自动</span><span class="c l">本地系统</span></div>
<div class="r" style="top:776px"><svg class="g" viewBox="0 0 16 16"><use href="#gear"/></svg><span class="c n"><span class="e">kisbizsrv</span></span><span class="c d"></span><span class="c s">已启动</span><span class="c t">手动</span><span class="c l">本地系统</span></div>
<div class="r" style="top:793px"><svg class="g" viewBox="0 0 16 16"><use href="#gear"/></svg><span class="c n"><span class="e">Kingdee.TPL.Service</span></span><span class="c d"></span><span class="c s"></span><span class="c t">手动</span><span class="c l">本地系统</span></div>
<div class="r" style="top:810px"><svg class="g" viewBox="0 0 16 16"><use href="#gear"/></svg><span class="c n"><span class="e">KDDelegateService</span></span><span class="c d"></span><span class="c s"></span><span class="c t">手动</span><span class="c l">本地系统</span></div>
<div class="r" style="top:827px"><svg class="g" viewBox="0 0 16 16"><use href="#gear"/></svg><span class="c n"><span class="e">K3MobileService</span></span><span class="c d"></span><span class="c s">已启动</span><span class="c t">自动</span><span class="c l">本地系统</span></div>
<div class="r" style="top:844px"><svg class="g" viewBox="0 0 16 16"><use href="#gear"/></svg><span class="c n"><span class="e">IPsec Policy Agent</span></span><span class="c d la"><span class="e">Int...</span></span><span class="c s">已启动</span><span class="c t">手动</span><span class="c l">网络服务</span></div>
<div class="r" style="top:861px"><svg class="g" viewBox="0 0 16 16"><use href="#gear"/></svg><span class="c n"><span class="e">IP Helper</span></span><span class="c d">使<span class="e">...</span></span><span class="c s">已启动</span><span class="c t">自动</span><span class="c l">本地系统</span></div>
<div class="r" style="top:878px"><svg class="g" viewBox="0 0 16 16"><use href="#gear"/></svg><span class="c n"><span class="e">Interactive Services Detection</span></span><span class="c d">启<span class="e">...</span></span><span class="c s"></span><span class="c t">手动</span><span class="c l">本地系统</span></div>
<div class="r" style="top:895px"><svg class="g" viewBox="0 0 16 16"><use href="#gear"/></svg><span class="c n"><span class="e">IKE and AuthIP IPsec Keying Modules</span></span><span class="c d la"><span class="e">IKE...</span></span><span class="c s">已启动</span><span class="c t">自动</span><span class="c l">本地系统</span></div>
<div id="right" class="abs"></div>
<!-- desc pane -->
<svg class="abs" style="left:212px;top:101px" width="17" height="17" viewBox="0 0 16 16"><use href="#gearnavy"/></svg>
<div class="abs b" style="left:208px;top:135px;white-space:nowrap"><span class="e eb">Print Spooler</span></div>
<div class="abs" style="left:208px;top:166px;white-space:nowrap;line-height:12px"><span style="color:#0a246a;text-decoration:underline">停止</span>此服务<br><span style="color:#800080;text-decoration:underline">重启动</span>此服务</div>
<div class="abs" style="left:208px;top:214px;white-space:nowrap;line-height:12px">描述<span class="e">:</span><br>将文件加载到内存供稍后打印</div>
<!-- list header cols -->
<div class="hc" style="left:416px;top:132px;width:476px">名称<i style="position:absolute;left:37px;top:5px;border:4px solid transparent;border-bottom:0;border-top:4px solid #808080"></i></div>
<div class="hc" style="left:893px;top:132px;width:49px">描述</div>
<div class="hc" style="left:943px;top:132px;width:93px">状态</div>
<div class="hc" style="left:1037px;top:132px;width:71px">启动类型</div>
<div class="hc" style="left:1109px;top:132px;width:60px">登录为</div>
<!-- vscroll -->
<div class="abs dither" style="left:1250px;top:147px;width:16px;height:749px"></div>
<div class="sb" style="left:1250px;top:131px;width:16px;height:16px"><i class="tri-u" style="left:4px;top:6px"></i></div>
<div class="sb" style="left:1250px;top:484px;width:16px;height:225px"></div>
<div class="sb" style="left:1250px;top:896px;width:16px;height:16px"><i class="tri-d" style="left:4px;top:6px"></i></div>
<!-- red box -->
<div class="abs" style="left:400px;top:175px;width:800px;height:30px;border:3px solid #ea3436;background:#fff;z-index:5"></div>
<!-- tabs -->
<div class="abs" style="left:201px;top:914px;width:1067px;height:1px;background:#404040"></div>
<svg class="abs" style="left:201px;top:914px" width="90" height="16" viewBox="0 0 90 16"><path d="M0 0 L7 15 L38 15 L44.5 0z" fill="#fff"/><path d="M0 0 L7 15 M38 15 L44.5 0.5" fill="none" stroke="#000" stroke-width="1.3"/><path d="M42 6 L46 15 L76.5 15 L83.5 0.5" fill="none" stroke="#000" stroke-width="1.3"/></svg>
<div class="abs" style="left:212px;top:915px">扩展</div>
<div class="abs" style="left:250px;top:915px">标准</div>
<!-- status bar -->
<div class="abs" style="left:3px;top:932px;width:1471px;height:18px;border:1px solid;border-color:#808080 #fff #fff #808080"></div>
<div class="abs" style="left:1476px;top:932px;width:130px;height:18px;border:1px solid;border-color:#808080 #fff #fff #808080"></div>
<div class="abs" style="left:1608px;top:932px;width:90px;height:18px;border:1px solid;border-color:#808080 #fff #fff #808080"></div>
<!-- right pane -->
<div class="abs" style="left:1273px;top:73px;width:420px;height:17px;background:#d4d0c8;border-bottom:1px solid #9c9a94"></div>
<div class="abs" style="left:1273px;top:90px;width:420px;height:1px;background:#fff"></div>
<div class="abs b bc" style="left:1279px;top:77px">操作</div>
<div class="ah bc" style="top:91px">服务<i class="tri-up"></i></div>
<div class="abs" style="left:1304px;top:124px">更多操作</div><i class="tri-r" style="left:1679px;top:122px"></i>
<div class="ah" style="top:145px"><span class="e eb" style="position:relative;top:-2px">Print Spooler</span><i class="tri-up"></i></div>
<div class="abs" style="left:1304px;top:178px">更多操作</div><i class="tri-r" style="left:1679px;top:176px"></i>

<div class="wm" style="left:-241px;top:21px">电话：<span class="wd">4006-6500-28</span></div>
<div class="wm" style="left:-241px;top:51px">网址:<span class="ww">www.tdxsoft.com</span></div>
<div class="wm" style="left:30px;top:21px">电话：<span class="wd">4006-6500-28</span></div>
<div class="wm" style="left:30px;top:51px">网址:<span class="ww">www.tdxsoft.com</span></div>
<div class="wm" style="left:301px;top:21px">电话：<span class="wd">4006-6500-28</span></div>
<div class="wm" style="left:301px;top:51px">网址:<span class="ww">www.tdxsoft.com</span></div>
<div class="wm" style="left:572px;top:21px">电话：<span class="wd">4006-6500-28</span></div>
<div class="wm" style="left:572px;top:51px">网址:<span class="ww">www.tdxsoft.com</span></div>
<div class="wm" style="left:843px;top:21px">电话：<span class="wd">4006-6500-28</span></div>
<div class="wm" style="left:843px;top:51px">网址:<span class="ww">www.tdxsoft.com</span></div>
<div class="wm" style="left:1114px;top:21px">电话：<span class="wd">4006-6500-28</span></div>
<div class="wm" style="left:1114px;top:51px">网址:<span class="ww">www.tdxsoft.com</span></div>
<div class="wm" style="left:1385px;top:21px">电话：<span class="wd">4006-6500-28</span></div>
<div class="wm" style="left:1385px;top:51px">网址:<span class="ww">www.tdxsoft.com</span></div>
<div class="wm" style="left:1656px;top:21px">电话：<span class="wd">4006-6500-28</span></div>
<div class="wm" style="left:1656px;top:51px">网址:<span class="ww">www.tdxsoft.com</span></div>
<div class="wm" style="left:-241px;top:131px">电话：<span class="wd">4006-6500-28</span></div>
<div class="wm" style="left:-241px;top:161px">网址:<span class="ww">www.tdxsoft.com</span></div>
<div class="wm" style="left:30px;top:131px">电话：<span class="wd">4006-6500-28</span></div>
<div class="wm" style="left:30px;top:161px">网址:<span class="ww">www.tdxsoft.com</span></div>
<div class="wm" style="left:301px;top:131px">电话：<span class="wd">4006-6500-28</span></div>
<div class="wm" style="left:301px;top:161px">网址:<span class="ww">www.tdxsoft.com</span></div>
<div class="wm" style="left:572px;top:131px">电话：<span class="wd">4006-6500-28</span></div>
<div class="wm" style="left:572px;top:161px">网址:<span class="ww">www.tdxsoft.com</span></div>
<div class="wm" style="left:843px;top:131px">电话：<span class="wd">4006-6500-28</span></div>
<div class="wm" style="left:843px;top:161px">网址:<span class="ww">www.tdxsoft.com</span></div>
<div class="wm" style="left:1114px;top:131px">电话：<span class="wd">4006-6500-28</span></div>
<div class="wm" style="left:1114px;top:161px">网址:<span class="ww">www.tdxsoft.com</span></div>
<div class="wm" style="left:1385px;top:131px">电话：<span class="wd">4006-6500-28</span></div>
<div class="wm" style="left:1385px;top:161px">网址:<span class="ww">www.tdxsoft.com</span></div>
<div class="wm" style="left:1656px;top:131px">电话：<span class="wd">4006-6500-28</span></div>
<div class="wm" style="left:1656px;top:161px">网址:<span class="ww">www.tdxsoft.com</span></div>
<div class="wm" style="left:-241px;top:241px">电话：<span class="wd">4006-6500-28</span></div>
<div class="wm" style="left:-241px;top:271px">网址:<span class="ww">www.tdxsoft.com</span></div>
<div class="wm" style="left:30px;top:241px">电话：<span class="wd">4006-6500-28</span></div>
<div class="wm" style="left:30px;top:271px">网址:<span class="ww">www.tdxsoft.com</span></div>
<div class="wm" style="left:301px;top:241px">电话：<span class="wd">4006-6500-28</span></div>
<div class="wm" style="left:301px;top:271px">网址:<span class="ww">www.tdxsoft.com</span></div>
<div class="wm" style="left:572px;top:241px">电话：<span class="wd">4006-6500-28</span></div>
<div class="wm" style="left:572px;top:271px">网址:<span class="ww">www.tdxsoft.com</span></div>
<div class="wm" style="left:843px;top:241px">电话：<span class="wd">4006-6500-28</span></div>
<div class="wm" style="left:843px;top:271px">网址:<span class="ww">www.tdxsoft.com</span></div>
<div class="wm" style="left:1114px;top:241px">电话：<span class="wd">4006-6500-28</span></div>
<div class="wm" style="left:1114px;top:271px">网址:<span class="ww">www.tdxsoft.com</span></div>
<div class="wm" style="left:1385px;top:241px">电话：<span class="wd">4006-6500-28</span></div>
<div class="wm" style="left:1385px;top:271px">网址:<span class="ww">www.tdxsoft.com</span></div>
<div class="wm" style="left:1656px;top:241px">电话：<span class="wd">4006-6500-28</span></div>
<div class="wm" style="left:1656px;top:271px">网址:<span class="ww">www.tdxsoft.com</span></div>
<div class="wm" style="left:-241px;top:351px">电话：<span class="wd">4006-6500-28</span></div>
<div class="wm" style="left:-241px;top:381px">网址:<span class="ww">www.tdxsoft.com</span></div>
<div class="wm" style="left:30px;top:351px">电话：<span class="wd">4006-6500-28</span></div>
<div class="wm" style="left:30px;top:381px">网址:<span class="ww">www.tdxsoft.com</span></div>
<div class="wm" style="left:301px;top:351px">电话：<span class="wd">4006-6500-28</span></div>
<div class="wm" style="left:301px;top:381px">网址:<span class="ww">www.tdxsoft.com</span></div>
<div class="wm" style="left:572px;top:351px">电话：<span class="wd">4006-6500-28</span></div>
<div class="wm" style="left:572px;top:381px">网址:<span class="ww">www.tdxsoft.com</span></div>
<div class="wm" style="left:843px;top:351px">电话：<span class="wd">4006-6500-28</span></div>
<div class="wm" style="left:843px;top:381px">网址:<span class="ww">www.tdxsoft.com</span></div>
<div class="wm" style="left:1114px;top:351px">电话：<span class="wd">4006-6500-28</span></div>
<div class="wm" style="left:1114px;top:381px">网址:<span class="ww">www.tdxsoft.com</span></div>
<div class="wm" style="left:1385px;top:351px">电话：<span class="wd">4006-6500-28</span></div>
<div class="wm" style="left:1385px;top:381px">网址:<span class="ww">www.tdxsoft.com</span></div>
<div class="wm" style="left:1656px;top:351px">电话：<span class="wd">4006-6500-28</span></div>
<div class="wm" style="left:1656px;top:381px">网址:<span class="ww">www.tdxsoft.com</span></div>
<div class="wm" style="left:-241px;top:461px">电话：<span class="wd">4006-6500-28</span></div>
<div class="wm" style="left:-241px;top:491px">网址:<span class="ww">www.tdxsoft.com</span></div>
<div class="wm" style="left:30px;top:461px">电话：<span class="wd">4006-6500-28</span></div>
<div class="wm" style="left:30px;top:491px">网址:<span class="ww">www.tdxsoft.com</span></div>
<div class="wm" style="left:301px;top:461px">电话：<span class="wd">4006-6500-28</span></div>
<div class="wm" style="left:301px;top:491px">网址:<span class="ww">www.tdxsoft.com</span></div>
<div class="wm" style="left:572px;top:461px">电话：<span class="wd">4006-6500-28</span></div>
<div class="wm" style="left:572px;top:491px">网址:<span class="ww">www.tdxsoft.com</span></div>
<div class="wm" style="left:843px;top:461px">电话：<span class="wd">4006-6500-28</span></div>
<div class="wm" style="left:843px;top:491px">网址:<span class="ww">www.tdxsoft.com</span></div>
<div class="wm" style="left:1114px;top:461px">电话：<span class="wd">4006-6500-28</span></div>
<div class="wm" style="left:1114px;top:491px">网址:<span class="ww">www.tdxsoft.com</span></div>
<div class="wm" style="left:1385px;top:461px">电话：<span class="wd">4006-6500-28</span></div>
<div class="wm" style="left:1385px;top:491px">网址:<span class="ww">www.tdxsoft.com</span></div>
<div class="wm" style="left:1656px;top:461px">电话：<span class="wd">4006-6500-28</span></div>
<div class="wm" style="left:1656px;top:491px">网址:<span class="ww">www.tdxsoft.com</span></div>
<div class="wm" style="left:-241px;top:571px">电话：<span class="wd">4006-6500-28</span></div>
<div class="wm" style="left:-241px;top:601px">网址:<span class="ww">www.tdxsoft.com</span></div>
<div class="wm" style="left:30px;top:571px">电话：<span class="wd">4006-6500-28</span></div>
<div class="wm" style="left:30px;top:601px">网址:<span class="ww">www.tdxsoft.com</span></div>
<div class="wm" style="left:301px;top:571px">电话：<span class="wd">4006-6500-28</span></div>
<div class="wm" style="left:301px;top:601px">网址:<span class="ww">www.tdxsoft.com</span></div>
<div class="wm" style="left:572px;top:571px">电话：<span class="wd">4006-6500-28</span></div>
<div class="wm" style="left:572px;top:601px">网址:<span class="ww">www.tdxsoft.com</span></div>
<div class="wm" style="left:843px;top:571px">电话：<span class="wd">4006-6500-28</span></div>
<div class="wm" style="left:843px;top:601px">网址:<span class="ww">www.tdxsoft.com</span></div>
<div class="wm" style="left:1114px;top:571px">电话：<span class="wd">4006-6500-28</span></div>
<div class="wm" style="left:1114px;top:601px">网址:<span class="ww">www.tdxsoft.com</span></div>
<div class="wm" style="left:1385px;top:571px">电话：<span class="wd">4006-6500-28</span></div>
<div class="wm" style="left:1385px;top:601px">网址:<span class="ww">www.tdxsoft.com</span></div>
<div class="wm" style="left:1656px;top:571px">电话：<span class="wd">4006-6500-28</span></div>
<div class="wm" style="left:1656px;top:601px">网址:<span class="ww">www.tdxsoft.com</span></div>
<div class="wm" style="left:-241px;top:681px">电话：<span class="wd">4006-6500-28</span></div>
<div class="wm" style="left:-241px;top:711px">网址:<span class="ww">www.tdxsoft.com</span></div>
<div class="wm" style="left:30px;top:681px">电话：<span class="wd">4006-6500-28</span></div>
<div class="wm" style="left:30px;top:711px">网址:<span class="ww">www.tdxsoft.com</span></div>
<div class="wm" style="left:301px;top:681px">电话：<span class="wd">4006-6500-28</span></div>
<div class="wm" style="left:301px;top:711px">网址:<span class="ww">www.tdxsoft.com</span></div>
<div class="wm" style="left:572px;top:681px">电话：<span class="wd">4006-6500-28</span></div>
<div class="wm" style="left:572px;top:711px">网址:<span class="ww">www.tdxsoft.com</span></div>
<div class="wm" style="left:843px;top:681px">电话：<span class="wd">4006-6500-28</span></div>
<div class="wm" style="left:843px;top:711px">网址:<span class="ww">www.tdxsoft.com</span></div>
<div class="wm" style="left:1114px;top:681px">电话：<span class="wd">4006-6500-28</span></div>
<div class="wm" style="left:1114px;top:711px">网址:<span class="ww">www.tdxsoft.com</span></div>
<div class="wm" style="left:1385px;top:681px">电话：<span class="wd">4006-6500-28</span></div>
<div class="wm" style="left:1385px;top:711px">网址:<span class="ww">www.tdxsoft.com</span></div>
<div class="wm" style="left:1656px;top:681px">电话：<span class="wd">4006-6500-28</span></div>
<div class="wm" style="left:1656px;top:711px">网址:<span class="ww">www.tdxsoft.com</span></div>
<div class="wm" style="left:-241px;top:791px">电话：<span class="wd">4006-6500-28</span></div>
<div class="wm" style="left:-241px;top:821px">网址:<span class="ww">www.tdxsoft.com</span></div>
<div class="wm" style="left:30px;top:791px">电话：<span class="wd">4006-6500-28</span></div>
<div class="wm" style="left:30px;top:821px">网址:<span class="ww">www.tdxsoft.com</span></div>
<div class="wm" style="left:301px;top:791px">电话：<span class="wd">4006-6500-28</span></div>
<div class="wm" style="left:301px;top:821px">网址:<span class="ww">www.tdxsoft.com</span></div>
<div class="wm" style="left:572px;top:791px">电话：<span class="wd">4006-6500-28</span></div>
<div class="wm" style="left:572px;top:821px">网址:<span class="ww">www.tdxsoft.com</span></div>
<div class="wm" style="left:843px;top:791px">电话：<span class="wd">4006-6500-28</span></div>
<div class="wm" style="left:843px;top:821px">网址:<span class="ww">www.tdxsoft.com</span></div>
<div class="wm" style="left:1114px;top:791px">电话：<span class="wd">4006-6500-28</span></div>
<div class="wm" style="left:1114px;top:821px">网址:<span class="ww">www.tdxsoft.com</span></div>
<div class="wm" style="left:1385px;top:791px">电话：<span class="wd">4006-6500-28</span></div>
<div class="wm" style="left:1385px;top:821px">网址:<span class="ww">www.tdxsoft.com</span></div>
<div class="wm" style="left:1656px;top:791px">电话：<span class="wd">4006-6500-28</span></div>
<div class="wm" style="left:1656px;top:821px">网址:<span class="ww">www.tdxsoft.com</span></div>
<div class="wm" style="left:-241px;top:901px">电话：<span class="wd">4006-6500-28</span></div>
<div class="wm" style="left:-241px;top:931px">网址:<span class="ww">www.tdxsoft.com</span></div>
<div class="wm" style="left:30px;top:901px">电话：<span class="wd">4006-6500-28</span></div>
<div class="wm" style="left:30px;top:931px">网址:<span class="ww">www.tdxsoft.com</span></div>
<div class="wm" style="left:301px;top:901px">电话：<span class="wd">4006-6500-28</span></div>
<div class="wm" style="left:301px;top:931px">网址:<span class="ww">www.tdxsoft.com</span></div>
<div class="wm" style="left:572px;top:901px">电话：<span class="wd">4006-6500-28</span></div>
<div class="wm" style="left:572px;top:931px">网址:<span class="ww">www.tdxsoft.com</span></div>
<div class="wm" style="left:843px;top:901px">电话：<span class="wd">4006-6500-28</span></div>
<div class="wm" style="left:843px;top:931px">网址:<span class="ww">www.tdxsoft.com</span></div>
<div class="wm" style="left:1114px;top:901px">电话：<span class="wd">4006-6500-28</span></div>
<div class="wm" style="left:1114px;top:931px">网址:<span class="ww">www.tdxsoft.com</span></div>
<div class="wm" style="left:1385px;top:901px">电话：<span class="wd">4006-6500-28</span></div>
<div class="wm" style="left:1385px;top:931px">网址:<span class="ww">www.tdxsoft.com</span></div>
<div class="wm" style="left:1656px;top:901px">电话：<span class="wd">4006-6500-28</span></div>
<div class="wm" style="left:1656px;top:931px">网址:<span class="ww">www.tdxsoft.com</span></div>
</body></html>
